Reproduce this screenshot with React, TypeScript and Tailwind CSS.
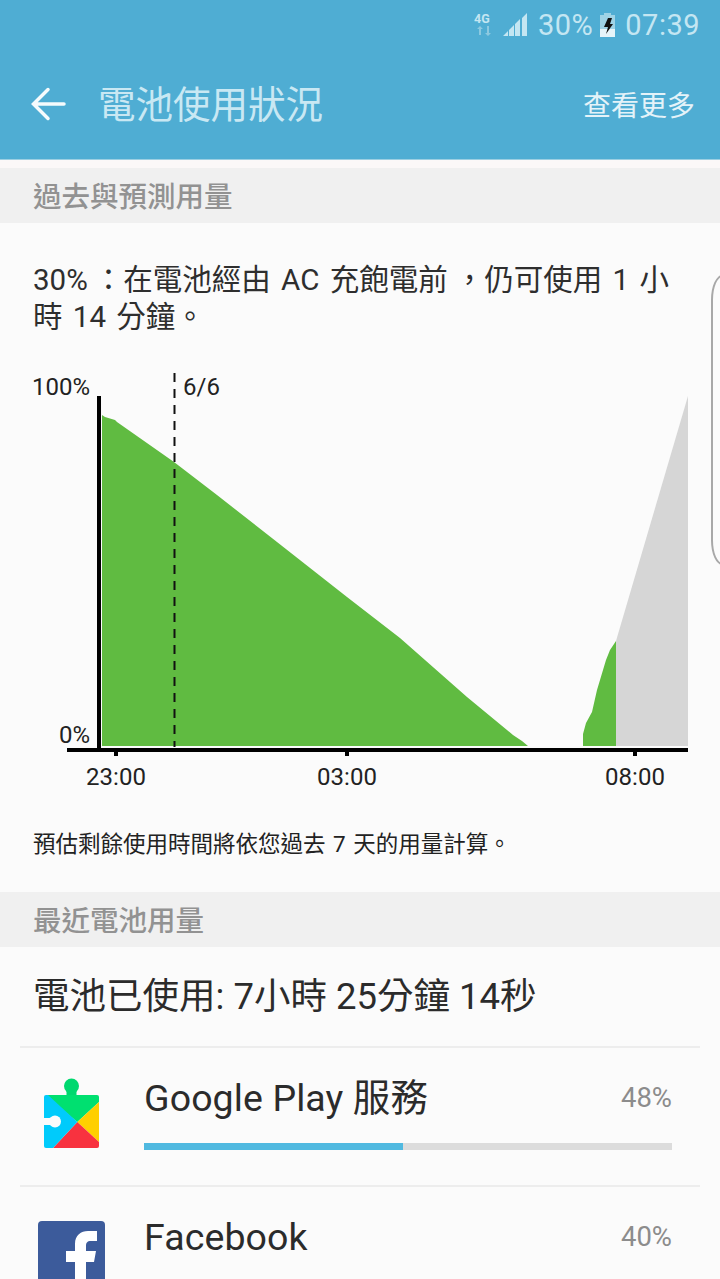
import React from 'react';

const cjk = { fontFamily: 'Roboto, "Noto Sans CJK TC", sans-serif' };

const StatusBar: React.FC = () => (
  <div className="flex h-[50px] items-center justify-end pr-[20px] text-[#c4e6f2]">
    <svg width="24" height="26" viewBox="0 0 24 26" className="mr-[5px]">
      <text x="0" y="11" fontSize="12.500" fontWeight="700" fill="#c4e6f2" fontFamily="Roboto, sans-serif">4G</text>
      <path d="M5 17v6h2v-6h2l-3-3-3 3zM13 21v-7h2v7h2l-3 3-3-3z" fill="#8cc9e0" />
    </svg>
    <svg width="25" height="24" viewBox="0 0 25 24" className="mr-[10px]">
      <path d="M0 23h5v-5zM6 23h5V12l-5 5zM12 23h5V6l-5 5zM19 23h5V0l-5 5z" fill="#c4e6f2" />
    </svg>
    <span className="mr-[6px] text-[29px] leading-none tracking-[0.5px]">30%</span>
    <svg width="17" height="24" viewBox="0 0 17 24" className="mr-[9px]">
      <path d="M5 0h7v2h4v22H1V2h4z" fill="#9fd3e6" />
      <path d="M1 16h15v8H1z" fill="#e6f4f9" />
      <path d="M9 5h4l-2 6h3l-7 10 2-7H5z" fill="#111" />
    </svg>
    <span className="text-[29px] leading-none tracking-[0.5px]">07:39</span>
  </div>
);

const AppBar: React.FC = () => (
  <div className="flex h-[110px] items-start border-b border-[#9ccfe2] pt-[27px]">
    <svg width="36" height="36" viewBox="0 0 36 36" className="ml-[30px] mt-[9px]">
      <path d="M34 18H5M18 3.500L3.500 18 18 32.500" fill="none" stroke="#f5fbfd" strokeWidth="3.500" strokeLinecap="round" />
    </svg>
    <span className="ml-[32px] text-[37.500px] leading-[56px] text-[#c9e8f3]">電池使用狀況</span>
    <span className="ml-auto mr-[25px] mt-[2px] text-[28px] leading-[56px] text-[#e4f3f9]">查看更多</span>
  </div>
);

const SectionHeader: React.FC<{ title: string }> = ({ title }) => (
  <div className="flex h-[55px] items-center bg-[#f0f0f0] pl-[33px] pt-[5px] text-[28.500px] font-medium text-[#929292]">{title}</div>
);

const Chart: React.FC = () => (
  <svg width="720" height="430" viewBox="0 365 720 430" className="block">
    <path
      d="M102 415 L105 417 L115 420 L117 422 L174 462 L217 495 L277 542 L347 597 L400 638 L467 697 L513 735 L522 741 L528 746 L102 746Z"
      fill="#60bb41"
    />
    <path d="M583 746 V734 L586 723 L592 712 L597 690 L606 660 L610 650 L616 641 V746Z" fill="#60bb41" />
    <path d="M616 641 L688 396 V746 H616Z" fill="#d6d6d6" />
    <path d="M99 396 V750" stroke="#000" strokeWidth="4" />
    <path d="M67 750 H688" stroke="#000" strokeWidth="4" />
    <path d="M116 750 v6 M347 750 v6 M635 750 v6" stroke="#000" strokeWidth="4" />
    <path d="M174.500 373 V747" stroke="#111" strokeWidth="2" strokeDasharray="9 7" />
    <g fontFamily="Roboto, sans-serif" fontSize="24" fill="#222">
      <text x="90" y="395" textAnchor="end">100%</text>
      <text x="90" y="743" textAnchor="end">0%</text>
      <text x="183" y="395">6/6</text>
      <text x="116" y="785" textAnchor="middle">23:00</text>
      <text x="347" y="785" textAnchor="middle">03:00</text>
      <text x="635" y="785" textAnchor="middle">08:00</text>
    </g>
  </svg>
);

const PlayServicesIcon: React.FC = () => (
  <svg width="56" height="71" viewBox="0 0 56 71">
    <circle cx="27.500" cy="8" r="7.500" fill="#00d86f" />
    <path d="M22.500 12h10v6h-10z" fill="#00d86f" />
    <path d="M3 17H53a2 2 0 0 1 2 2v5L33.300 44 2 18z" fill="#00e070" />
    <path d="M55 24V64L33.300 44z" fill="#ffcf00" />
    <path d="M9 70L33.300 44 55 64V68a2 2 0 0 1-2 2z" fill="#f8323f" />
    <path d="M0 19a2 2 0 0 1 2-2h2L33.300 44 9 70H2a2 2 0 0 1-2-2z" fill="#00cbfb" />
    <circle cx="11" cy="43.500" r="6" fill="#fbfbfb" />
    <path d="M0 40h8v7H0z" fill="#fbfbfb" />
  </svg>
);

const FacebookIcon: React.FC = () => (
  <div className="h-[90px] w-[67px] overflow-hidden rounded-[4px] bg-[#3c5b9b]">
    <svg width="67" height="90" viewBox="0 0 67 90">
      <path d="M37 90V41H28V30H37V23C37 14 43 10 50 10H59V20H53C49 20 48 22 48 25V30H58L56 41H48V90Z" fill="#fff" />
    </svg>
  </div>
);

const UsageRow: React.FC<{ name: string; percent: number; fill?: number; icon: React.ReactNode; iconClass: string }> = ({
  name,
  percent,
  fill,
  icon,
  iconClass,
}) => (
  <div className="mx-[20px] flex h-[139px] border-t-2 border-[#ededed]">
    <div className={iconClass}>{icon}</div>
    <div className="flex-1 pr-[28px]">
      <div className="flex items-start justify-between pt-[27px]">
        <span className="text-[37.500px] leading-[46px] tracking-[0.1px] text-[#2b2b2b]">{name}</span>
        <span className="pt-[5px] text-[27.500px] leading-[36px] text-[#8c8c8c]">{percent}%</span>
      </div>
      {fill !== undefined && (
        <div className="mt-[22px] h-[7px] bg-[#dcdcdc]">
          <div className="h-full bg-[#50b9e0]" style={{ width: `${fill}%` }} />
        </div>
      )}
    </div>
  </div>
);

const App: React.FC = () => {
  return (
    <div lang="zh-TW" className="relative h-[1279px] w-[720px] overflow-hidden bg-[#fbfbfb]" style={cjk}>
      <div className="bg-[#4fadd3]">
        <StatusBar />
        <AppBar />
      </div>
      <div className="h-[8px] bg-[#fbf8f8]" />
      <SectionHeader title="過去與預測用量" />

      <div className="pl-[33px] pt-[39px] text-[29.500px] leading-[37px] text-[#2e2e2e] [word-spacing:3px]">
        <div className="whitespace-nowrap">
          30%<span className="pl-[6px]">：</span>在電池經由 AC 充飽電前<span className="pl-[7px]">，</span>仍可使用 1 小
        </div>
        <div className="whitespace-nowrap">時 14 分鐘。</div>
      </div>
      <div className="mt-[29px]">
        <Chart />
      </div>
      <div className="mt-[34px] pl-[33px] text-[22.500px] leading-[30px] text-[#222] [word-spacing:2px]">
        預估剩餘使用時間將依您過去 7 天的用量計算。
      </div>
      <div className="mt-[33px]">
        <SectionHeader title="最近電池用量" />
      </div>

      <div className="flex h-[99px] items-center pl-[33px] pt-[2px] text-[36.500px] text-[#2b2b2b]">電池已使用: 7小時 25分鐘 14秒</div>
      <UsageRow
        name="Google Play 服務"
        percent={48}
        fill={49}
        icon={<PlayServicesIcon />}
        iconClass="ml-[24px] mr-[44px] w-[56px] pt-[30px]"
      />
      <UsageRow
        name="Facebook"
        percent={40}
        icon={<FacebookIcon />}
        iconClass="ml-[18px] mr-[39px] w-[67px] pt-[34px]"
      />

      {/* edge handle that sits over the page */}
      <div className="absolute right-[-14px] top-[275px] h-[290px] w-[23px] rounded-[14px/30px] border-2 border-[#a8a8a8]" />
    </div>
  );
};

export default App;
